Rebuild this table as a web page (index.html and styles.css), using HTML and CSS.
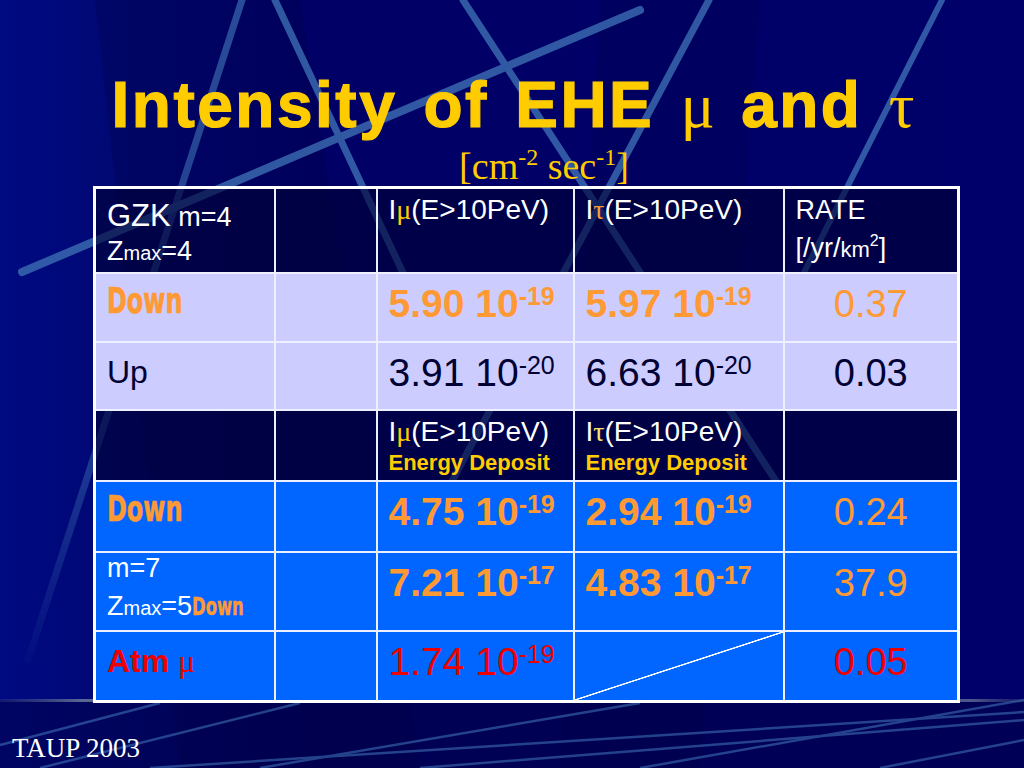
FILE: index.html
```html
<!DOCTYPE html>
<html lang="en">
<head>
<meta charset="utf-8">
<title>Intensity of EHE μ and τ</title>
<link rel="stylesheet" href="styles.css">
</head>
<body>
<div class="slide">
  <svg class="backdrop" width="1024" height="768" viewBox="0 0 1024 768" aria-hidden="true">
    <defs>
      <linearGradient id="bgGrad" x1="0" y1="0" x2="1" y2="0">
        <stop offset="0" stop-color="#000a82"/>
        <stop offset="0.12" stop-color="#000872"/>
        <stop offset="0.3" stop-color="#000066"/>
        <stop offset="1" stop-color="#00006a"/>
      </linearGradient>
      <linearGradient id="shelf" x1="0" y1="0" x2="1" y2="0">
        <stop offset="0" stop-color="#5a6a8a" stop-opacity="0.2"/>
        <stop offset="0.08" stop-color="#8090a8" stop-opacity="0.7"/>
        <stop offset="0.95" stop-color="#8090a8" stop-opacity="0.6"/>
        <stop offset="1" stop-color="#5a6a8a" stop-opacity="0.2"/>
      </linearGradient>
      <linearGradient id="fadeDown" x1="0" y1="0" x2="0" y2="1">
        <stop offset="0" stop-color="#3d6fb3" stop-opacity="0.85"/>
        <stop offset="0.7" stop-color="#3d6fb3" stop-opacity="0.6"/>
        <stop offset="1" stop-color="#3d6fb3" stop-opacity="0.05"/>
      </linearGradient>
    </defs>
    <rect width="1024" height="768" fill="url(#bgGrad)"/>
    <polygon points="95,0 300,0 420,768 180,768" fill="#000040" opacity="0.25"/>
    <polygon points="600,0 760,0 700,768 560,768" fill="#000040" opacity="0.2"/>
    <polygon points="0,700 1024,700 1024,768 0,768" fill="#000040" opacity="0.45"/>
    <g stroke="#3d6fb3" stroke-linecap="round" fill="none" opacity="0.8">
      <line x1="242" y1="0" x2="28" y2="660" stroke="url(#fadeDown)" stroke-width="7"/>
      <line x1="275" y1="0" x2="412" y2="292" stroke-width="7"/>
      <line x1="463" y1="0" x2="785" y2="495" stroke-width="7"/>
      <line x1="709" y1="0" x2="450" y2="485" stroke-width="7"/>
      <line x1="942" y1="0" x2="790" y2="300" stroke-width="6"/>
      <line x1="22" y1="272" x2="640" y2="10" stroke-width="8"/>
    </g>
    <g stroke="#3d6fb3" fill="none" opacity="0.6" stroke-width="2.5">
      <line x1="0" y1="745" x2="160" y2="703"/>
      <line x1="40" y1="768" x2="300" y2="703"/>
      <line x1="150" y1="768" x2="1024" y2="712"/>
      <line x1="260" y1="768" x2="640" y2="703"/>
      <line x1="420" y1="768" x2="1024" y2="720"/>
      <line x1="640" y1="768" x2="1024" y2="700"/>
      <line x1="880" y1="768" x2="1024" y2="740"/>
    </g>
    <rect x="0" y="699" width="1024" height="3" fill="url(#shelf)"/>
  </svg>

  <main class="content">
    <h1 class="title">Intensity of EHE <span class="greek">μ</span> and <span class="greek">τ</span></h1>
    <p class="units">[cm<span class="u-sup">-2</span> sec<span class="u-sup">-1</span>]</p>

    <table class="data">
      <colgroup>
        <col class="c1"><col class="c2"><col class="c3"><col class="c4"><col class="c5">
      </colgroup>
      <tr class="row-head r1">
        <td class="h-gzk"><span class="gzk">GZK</span> m=4<br>Z<span class="small">max</span>=4</td>
        <td></td>
        <td class="h-int">I<span class="mu">μ</span>(E&gt;10PeV)</td>
        <td class="h-int">I<span class="tau">τ</span>(E&gt;10PeV)</td>
        <td class="h-rate">RATE<br>[/yr/<span class="km">km</span><span class="km-sup">2</span>]</td>
      </tr>
      <tr class="row-lav r2">
        <td class="lbl"><span class="down">Down</span></td>
        <td></td>
        <td class="num bold orange">5.90 10<span class="sup">-19</span></td>
        <td class="num bold orange">5.97 10<span class="sup">-19</span></td>
        <td class="num rate orange">0.37</td>
      </tr>
      <tr class="row-lav r3">
        <td class="lbl up">Up</td>
        <td></td>
        <td class="num navy">3.91 10<span class="sup">-20</span></td>
        <td class="num navy">6.63 10<span class="sup">-20</span></td>
        <td class="num rate navy">0.03</td>
      </tr>
      <tr class="row-head r4">
        <td></td>
        <td></td>
        <td class="h-dep"><div class="dep-l1">I<span class="mu">μ</span>(E&gt;10PeV)</div><div class="dep-l2">Energy Deposit</div></td>
        <td class="h-dep"><div class="dep-l1">I<span class="tau2">τ</span>(E&gt;10PeV)</div><div class="dep-l2">Energy Deposit</div></td>
        <td></td>
      </tr>
      <tr class="row-blue r5">
        <td class="lbl"><span class="down">Down</span></td>
        <td></td>
        <td class="num bold orange">4.75 10<span class="sup">-19</span></td>
        <td class="num bold orange">2.94 10<span class="sup">-19</span></td>
        <td class="num rate orange">0.24</td>
      </tr>
      <tr class="row-blue r6">
        <td class="m7"><div class="m7-l1">m=7</div><div class="m7-l2">Z<span class="small">max</span>=5<span class="down small-down">Down</span></div></td>
        <td></td>
        <td class="num bold orange">7.21 10<span class="sup">-17</span></td>
        <td class="num bold orange">4.83 10<span class="sup">-17</span></td>
        <td class="num rate orange">37.9</td>
      </tr>
      <tr class="row-blue r7">
        <td class="lbl atm">Atm <span class="greek-s">μ</span></td>
        <td></td>
        <td class="num red">1.74 10<span class="sup">-19</span></td>
        <td class="diag"></td>
        <td class="num rate red">0.05</td>
      </tr>
    </table>

    <footer class="footer">TAUP 2003</footer>
  </main>
</div>
</body>
</html>
```

FILE: styles.css
```css
* { box-sizing: border-box; }

html, body {
  margin: 0;
  padding: 0;
  background: #000066;
}

.slide {
  position: relative;
  width: 1024px;
  height: 768px;
  overflow: hidden;
  font-family: "Liberation Sans", Arial, sans-serif;
}

.backdrop {
  position: absolute;
  left: 0;
  top: 0;
  z-index: 0;
}

.content {
  position: relative;
  z-index: 1;
  display: flex;
  flex-direction: column;
  align-items: flex-start;
}

.title {
  align-self: stretch;
  margin: 70px 0 0 0;
  text-align: center;
  font-family: "Liberation Sans", Arial, sans-serif;
  font-weight: bold;
  font-size: 64px;
  line-height: 70px;
  letter-spacing: 2.5px;
  word-spacing: 6px;
  color: #ffcc00;
  -webkit-text-stroke: 1.2px #ffcc00;
  padding-left: 2px;
}

.title .greek {
  font-family: "Liberation Serif", "Times New Roman", serif;
  font-weight: normal;
  letter-spacing: 0;
  -webkit-text-stroke: 0;
}

.units {
  align-self: stretch;
  margin: 4px 0 0 0;
  text-align: center;
  padding-left: 64px;
  font-family: "Liberation Serif", "Times New Roman", serif;
  font-size: 38px;
  line-height: 40px;
  color: #ffcc00;
}

.u-sup {
  font-size: 24px;
  vertical-align: 14px;
  line-height: 1;
}

/* ---------- table ---------- */
.data {
  margin: 0 0 0 93px;
  width: 864px;
  table-layout: fixed;
  border-collapse: collapse;
  border: 3px solid #ffffff;
  font-family: "Liberation Sans", Arial, sans-serif;
}

.c1 { width: 180px; }
.c2 { width: 102px; }
.c3 { width: 197px; }
.c4 { width: 210px; }
.c5 { width: 175px; }

.data td {
  border: 2px solid #eef0ff;
  vertical-align: top;
  padding: 0 0 0 11px;
  white-space: nowrap;
  overflow: hidden;
}

.r1 { height: 85px; }
.r2 { height: 69px; }
.r3 { height: 68px; }
.r4 { height: 71px; }
.r5 { height: 71px; }
.r6 { height: 79px; }
.r7 { height: 71px; }

.row-head td { background: rgba(0, 0, 52, 0.6); color: #ffffff; }
.row-lav td { background: #ccccff; }
.row-blue td { background: #0066ff; }

/* header cells */
.h-gzk {
  font-size: 27px;
  line-height: 34px;
  padding-top: 10px !important;
}
.gzk { font-size: 31px; }
.small { font-size: 20px; }

.h-int {
  font-size: 28px;
  line-height: 34px;
  padding-top: 4px !important;
}

.h-rate {
  font-size: 27px;
  line-height: 38px;
  padding-top: 2px !important;
}
.km { font-size: 22px; }
.km-sup { font-size: 16px; vertical-align: 11px; line-height: 1; }

.mu {
  font-family: "Liberation Serif", "Times New Roman", serif;
  color: #ffcc00;
}
.tau {
  font-family: "Liberation Serif", "Times New Roman", serif;
  color: #ff9933;
}
.tau2 {
  font-family: "Liberation Serif", "Times New Roman", serif;
  color: #ffe066;
}

.h-dep .dep-l1 {
  font-size: 28px;
  line-height: 42px;
}
.h-dep .dep-l2 {
  font-size: 22px;
  font-weight: bold;
  line-height: 19px;
  color: #ffcc00;
}

/* data cells */
.num {
  font-size: 39px;
  line-height: 60px;
}
.num.rate {
  font-size: 38px;
  text-align: center;
  padding-left: 0 !important;
}
.bold { font-weight: bold; }
.orange { color: #ff9933; }
.navy { color: #000033; }
.red { color: #ee0000; }

.sup {
  font-size: 25px;
  vertical-align: 12px;
  line-height: 1;
}

.lbl {
  font-size: 32px;
  line-height: 54px;
}

.down {
  display: inline-block;
  font-family: "DejaVu Sans Condensed", "Liberation Sans Narrow", "Arial Narrow", sans-serif;
  font-stretch: condensed;
  font-weight: bold;
  font-size: 35px;
  color: #ff9933;
  -webkit-text-stroke: 0.6px #ff9933;
  transform: scaleX(0.76);
  transform-origin: 0 50%;
}
.small-down {
  font-size: 24px;
  -webkit-text-stroke: 0.4px #ff9933;
}

.up {
  color: #000033;
  line-height: 58px;
}

.m7 { color: #ffffff; font-size: 27px; }
.m7-l1 { line-height: 31px; }
.m7-l2 { line-height: 44px; }

.atm {
  color: #ee0000;
  font-weight: bold;
  line-height: 58px;
}
.greek-s {
  font-family: "Liberation Serif", "Times New Roman", serif;
  font-weight: normal;
}

.diag {
  background:
    linear-gradient(to bottom right,
      transparent calc(50% - 1px),
      #ffffff calc(50% - 0.5px),
      #ffffff calc(50% + 0.5px),
      transparent calc(50% + 1px)),
    #0066ff !important;
}

.footer {
  margin: 30px 0 0 12px;
  font-family: "Liberation Serif", "Times New Roman", serif;
  font-size: 27px;
  line-height: 30px;
  color: #ffffff;
}
```
